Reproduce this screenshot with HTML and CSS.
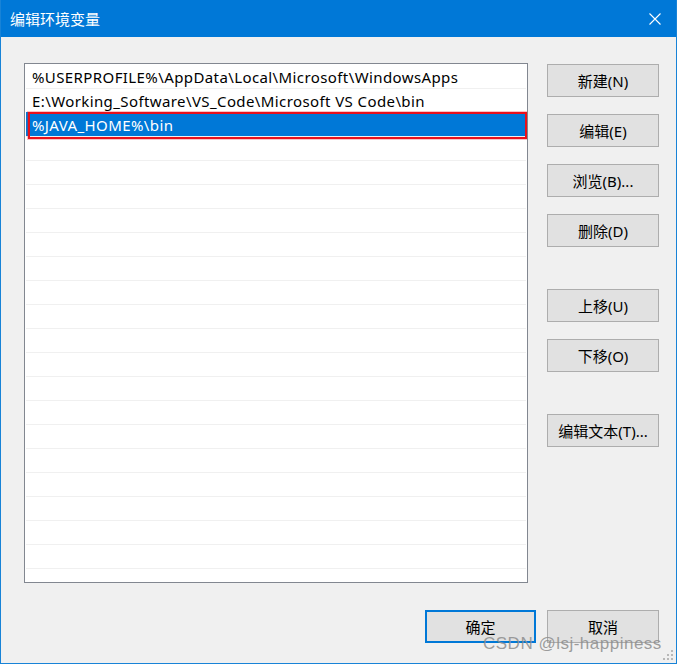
FILE: index.html
```html
<!DOCTYPE html>
<html lang="zh-CN">
<head>
<meta charset="utf-8">
<title>编辑环境变量</title>
<link rel="stylesheet" href="styles.css">
</head>
<body>
<div class="window">
  <div class="titlebar">
    <span class="title">编辑环境变量</span>
    <svg class="close" width="12" height="12" viewBox="0 0 12 12"><path d="M0.5 0.5 L11.5 11.5 M11.5 0.5 L0.5 11.5" stroke="#fff" stroke-width="1.1" fill="none"/></svg>
  </div>
  <div class="content">
    <div class="main">
      <div class="listbox">
        <div class="row">%USERPROFILE%\AppData\Local\Microsoft\WindowsApps</div>
        <div class="row">E:\Working_Software\VS_Code\Microsoft VS Code\bin</div>
        <div class="row selected">%JAVA_HOME%\bin</div>
        <div class="row"></div><div class="row"></div><div class="row"></div><div class="row"></div>
        <div class="row"></div><div class="row"></div><div class="row"></div><div class="row"></div>
        <div class="row"></div><div class="row"></div><div class="row"></div><div class="row"></div>
        <div class="row"></div><div class="row"></div><div class="row"></div><div class="row"></div>
        <div class="row"></div><div class="row"></div><div class="row"></div>
        <div class="mark"></div>
      </div>
      <div class="side">
        <div class="group">
          <button class="btn">新建(N)</button>
          <button class="btn">编辑(E)</button>
          <button class="btn">浏览(B)...</button>
          <button class="btn">删除(D)</button>
        </div>
        <div class="group">
          <button class="btn">上移(U)</button>
          <button class="btn">下移(O)</button>
        </div>
        <div class="group">
          <button class="btn">编辑文本(T)...</button>
        </div>
      </div>
    </div>
    <div class="footer">
      <button class="btn default">确定</button>
      <button class="btn">取消</button>
    </div>
  </div>
  <div class="watermark">CSDN @lsj-happiness</div>
  <svg class="grip" width="10" height="10" viewBox="0 0 10 10">
    <rect x="8" y="0" width="2" height="2" fill="#b8b8b8"/>
    <rect x="4" y="4" width="2" height="2" fill="#b8b8b8"/>
    <rect x="8" y="4" width="2" height="2" fill="#b8b8b8"/>
    <rect x="0" y="8" width="2" height="2" fill="#b8b8b8"/>
    <rect x="4" y="8" width="2" height="2" fill="#b8b8b8"/>
    <rect x="8" y="8" width="2" height="2" fill="#b8b8b8"/>
  </svg>
</div>
</body>
</html>
```
FILE: styles.css
```css
* { box-sizing: border-box; }
html, body { margin: 0; padding: 0; background: #f0f0f0; }
body {
  font-family: "Noto Sans", "Noto Sans CJK SC", sans-serif;
  font-size: 15px;
  color: #000;
}
.window {
  position: relative;
  width: 677px;
  height: 664px;
  border: 1px solid #1883d7;
  border-top: none;
  background: #f0f0f0;
  display: flex;
  flex-direction: column;
  overflow: hidden;
}
.titlebar {
  height: 37px;
  background: #0078d7;
  display: flex;
  align-items: center;
  justify-content: space-between;
  padding: 0 15px 0 9px;
  flex: none;
}
.title {
  color: #fff;
  font-family: "Noto Sans CJK SC", sans-serif;
  font-size: 15px;
  line-height: 20px;
}
.close { display: block; }
.content {
  flex: 1;
  display: flex;
  flex-direction: column;
  padding: 26px 17px 0 23px;
}
.main {
  display: flex;
  gap: 19px;
}
.listbox {
  position: relative;
  width: 504px;
  height: 520px;
  border: 1px solid #828790;
  background: #fff;
  overflow: hidden;
  padding: 0 1px;
}
.row {
  height: 24px;
  line-height: 24px;
  border-top: 1px solid #f0f0f0;
  padding-left: 6px;
  white-space: nowrap;
  font-size: 15px;
  letter-spacing: 0.4px;
}
.row:first-child { border-top-color: transparent; }
.row.selected {
  background: #0078d7;
  color: #fff;
  border-top-color: #0078d7;
}
.mark {
  position: absolute;
  left: 3px;
  top: 48px;
  width: 499px;
  height: 27px;
  border: 2px solid #e8111c;
  box-shadow: 0 0 0 1px rgba(232, 17, 28, 0.25);
}
.side {
  display: flex;
  flex-direction: column;
  gap: 42px;
  padding-top: 1px;
}
.group {
  display: flex;
  flex-direction: column;
  gap: 17px;
}
.btn {
  width: 112px;
  height: 33px;
  background: #e1e1e1;
  border: 1px solid #adadad;
  font-family: "Noto Sans", "Noto Sans CJK SC", sans-serif;
  font-size: 15px;
  color: #000;
  padding: 0;
  margin: 0;
  line-height: 20px;
}
.footer {
  display: flex;
  justify-content: flex-end;
  gap: 11px;
  margin-top: 27px;
}
.btn.default {
  width: 111px;
  border: 2px solid #0078d7;
}
.watermark {
  position: absolute;
  left: 482px;
  top: 634px;
  font-family: "Liberation Sans", Arial, sans-serif;
  font-size: 17px;
  color: rgba(140, 140, 140, 0.85);
  white-space: nowrap;
  letter-spacing: 0.5px;
}
.grip {
  position: absolute;
  right: 3px;
  bottom: 3px;
}
```
